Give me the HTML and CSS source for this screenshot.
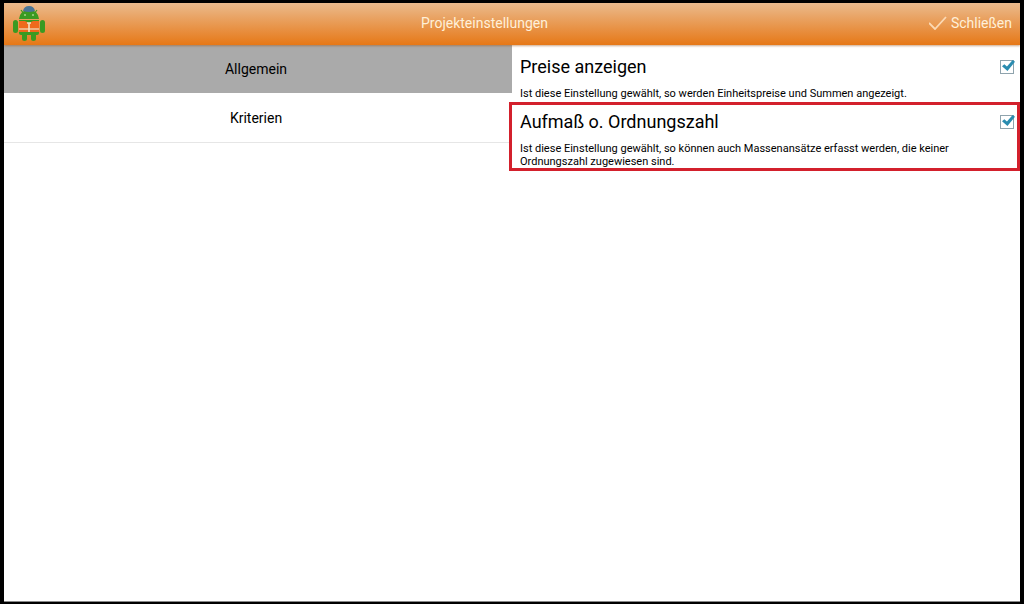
FILE: index.html
```html
<!DOCTYPE html>
<html lang="de">
<head>
    <meta charset="UTF-8">
    <meta name="viewport" content="width=device-width, initial-scale=1.0">
    <title>Projekteinstellungen</title>
    <link rel="stylesheet" href="styles.css">
</head>
<body>
    <header>
        <svg class="logo" viewBox="0 0 34 38" aria-hidden="true">
            <path d="M9 6 L12 10 M25 6 L22 10" stroke="#3a9a22" stroke-width="1.2"/>
            <path d="M7 15 Q8 6 17 6 Q26 6 27 15 Z" fill="#3a9a22"/>
            <path d="M11 7 Q12 2 17 2 Q22 2 23 7 Q17 9 11 7 Z" fill="#4a7596"/>
            <circle cx="13" cy="11" r="1" fill="#a5d48c"/>
            <circle cx="21" cy="11" r="1" fill="#a5d48c"/>
            <rect x="1" y="16" width="5" height="13" rx="2.5" fill="#3a9a22"/>
            <rect x="28" y="16" width="5" height="13" rx="2.5" fill="#3a9a22"/>
            <rect x="10" y="27" width="5" height="10" rx="2.5" fill="#3a9a22"/>
            <rect x="19" y="27" width="5" height="10" rx="2.5" fill="#3a9a22"/>
            <path d="M7 16 H27 V29 Q27 31 25 31 H9 Q7 31 7 29 Z" fill="#3a9a22"/>
            <path d="M7 17 H13 L17 19 L21 17 H27 V28 H7 Z" fill="#ee6a1c"/>
            <path d="M7 25 H27" stroke="#f0e2c4" stroke-width="1.2"/>
            <path d="M15 19 H19 M17 19 V28" stroke="#f0e2c4" stroke-width="1.6"/>
        </svg>
        <h1>Projekteinstellungen</h1>
        <button class="close" type="button">
            <svg viewBox="0 0 18 14" aria-hidden="true">
                <path d="M0 7 L6 13 L17 1" fill="none" stroke="#fbd9b4" stroke-width="1.8"/>
            </svg>
            Schließen
        </button>
    </header>

    <main>
        <nav>
            <button class="tab active" type="button">Allgemein</button>
            <button class="tab" type="button">Kriterien</button>
        </nav>

        <section class="settings">
            <div class="setting">
                <div class="setting-head">
                    <label for="prices">Preise anzeigen</label>
                    <input type="checkbox" id="prices" aria-describedby="prices-info" checked>
                </div>
                <p id="prices-info">Ist diese Einstellung gewählt, so werden Einheitspreise und Summen angezeigt.</p>
            </div>
            <div class="setting marked">
                <div class="setting-head">
                    <label for="measure">Aufmaß o. Ordnungszahl</label>
                    <input type="checkbox" id="measure" aria-describedby="measure-info" checked>
                </div>
                <p id="measure-info">Ist diese Einstellung gewählt, so können auch Massenansätze erfasst werden, die keiner Ordnungszahl zugewiesen sind.</p>
            </div>
        </section>
    </main>
</body>
</html>
```
FILE: styles.css
```css
* {
    box-sizing: border-box;
}
body {
    font-family: Roboto, sans-serif;
    margin: 0;
    min-height: 100vh;
    display: flex;
    flex-direction: column;
    border: 4px solid #000;
    border-top-width: 3px;
    border-bottom-width: 2px;
    background-color: #fff;
    color: #000;
}
header {
    display: flex;
    align-items: center;
    height: 42px;
    padding: 0 8px 2px;
    background-image: linear-gradient(#ebba8c, #e67817);
    box-shadow: 0 1px 2px rgba(150, 80, 20, 0.5);
    position: relative;
}
.logo {
    width: 34px;
    height: 38px;
}
header h1 {
    flex: 1;
    margin: 0;
    font-size: 14px;
    font-weight: 400;
    text-align: center;
    color: #fff0d8;
}
button {
    font-family: inherit;
    font-size: 14px;
    border: none;
    cursor: pointer;
}
.close {
    display: flex;
    align-items: center;
    gap: 4px;
    padding: 0 0 0 6px;
    background: none;
    color: #fff0d8;
}
.close svg {
    width: 18px;
    height: 14px;
}
main {
    flex: 1;
    display: grid;
    grid-template-columns: 1fr 1fr;
    border-bottom: 1px solid #888;
}
nav {
    display: flex;
    flex-direction: column;
}
.tab {
    height: 48px;
    padding: 0 4px 0 0;
    background-color: #fff;
    color: #000;
}
.tab.active {
    background-color: #aaa;
}
.tab:last-child {
    height: 50px;
    border-bottom: 1px solid #e6e6e6;
}
.setting {
    padding: 8px 6px 0 8px;
    position: relative;
}
.setting-head {
    display: flex;
    justify-content: space-between;
    align-items: center;
    height: 26px;
}
.setting label {
    font-size: 18px;
}
.setting p {
    margin: 8px 40px 0 0;
    font-size: 11px;
    line-height: 13px;
}
.setting input {
    appearance: none;
    width: 14px;
    height: 14px;
    margin: 2px 0 0;
    border: 1px solid #8fa3ad;
    background-color: #fff;
    position: relative;
}
.setting input:checked::after {
    content: "";
    position: absolute;
    top: -1px;
    left: 1px;
    width: 13px;
    height: 11px;
    background-color: #2a8cb0;
    clip-path: polygon(0 56%, 18% 38%, 38% 58%, 82% 0, 100% 16%, 42% 100%);
}
/* red frame around the highlighted setting */
.marked::after {
    content: "";
    position: absolute;
    inset: 2px 0 -3px -3px;
    border: 3px solid #d3202c;
    pointer-events: none;
}
```
